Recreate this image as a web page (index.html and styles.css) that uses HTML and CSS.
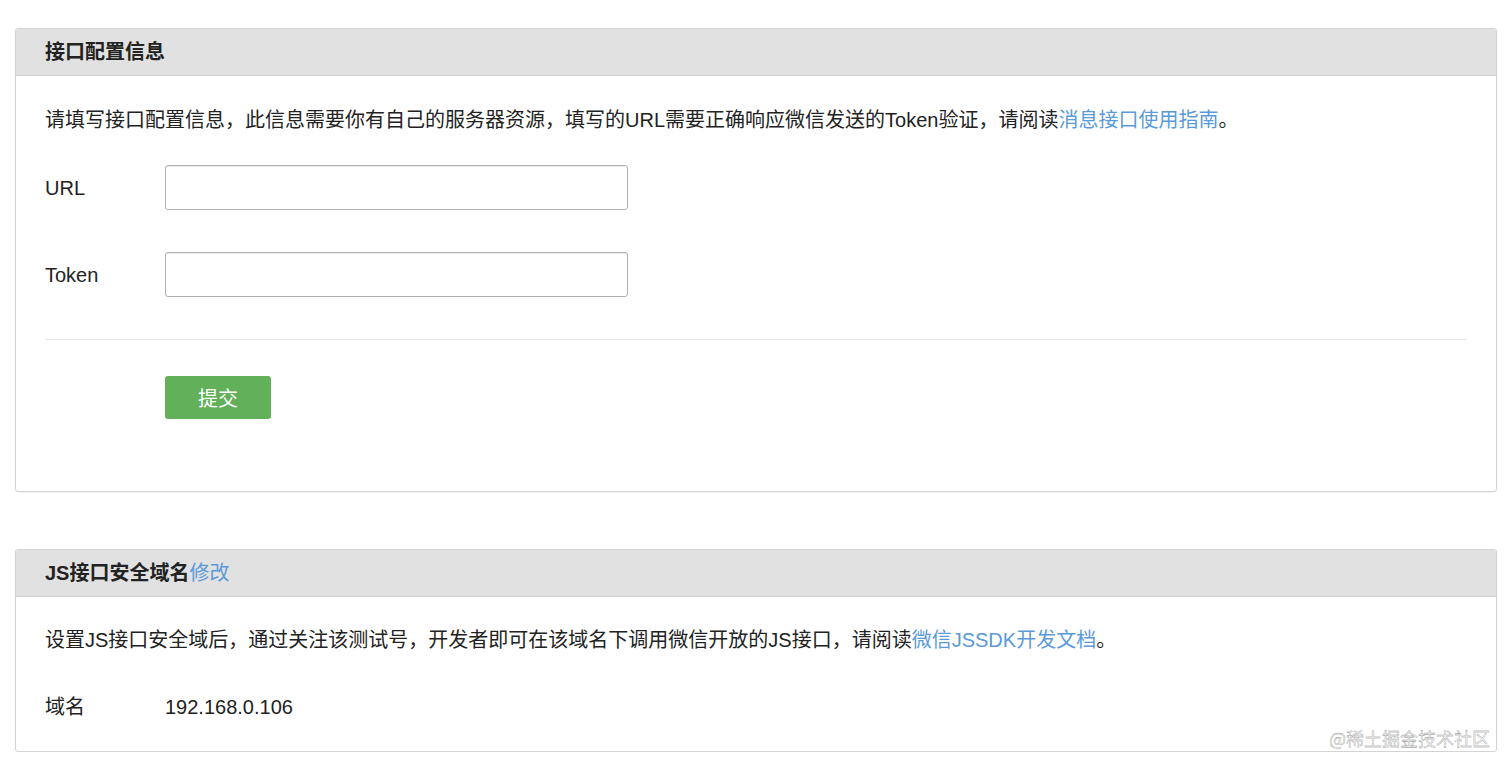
FILE: index.html
```html
<!DOCTYPE html>
<html>

<head>
	<meta charset="utf-8">
	<title>测试号管理</title>
	<link rel="stylesheet" href="styles.css">
</head>

<body>

	<div class="page">

		<div class="panel">
			<div class="panel_head">接口配置信息</div>
			<div class="panel_body">
				<p class="tip">请填写接口配置信息，此信息需要你有自己的服务器资源，填写的URL需要正确响应微信发送的Token验证，请阅读<a href="#">消息接口使用指南</a>。</p>

				<div class="form_row">
					<label class="label">URL</label>
					<input class="field" type="text">
				</div>
				<div class="form_row">
					<label class="label">Token</label>
					<input class="field" type="text">
				</div>

				<div class="divider"></div>

				<div class="actions">
					<button class="submit">提交</button>
				</div>
			</div>
		</div>

		<div class="panel">
			<div class="panel_head">JS接口安全域名<a class="edit" href="#">修改</a></div>
			<div class="panel_body short">
				<p class="tip">设置JS接口安全域后，通过关注该测试号，开发者即可在该域名下调用微信开放的JS接口，请阅读<a href="#">微信JSSDK开发文档</a>。</p>

				<div class="info_row">
					<span class="label">域名</span>
					<span class="value">192.168.0.106</span>
				</div>
			</div>
		</div>

	</div>

	<div class="watermark">@稀土掘金技术社区</div>

</body>
</html>
```

FILE: styles.css
```css
body {
	margin: 0;
	background: #fff;
	color: #222;
	font-family: "Liberation Sans", "Noto Sans CJK SC", sans-serif;
	font-size: 20px;
}
a {
	color: #5a9ad9;
	text-decoration: none;
}
.page {
	padding: 28px 15px 0 15px;
}
.panel {
	border: 1px solid #d4d4d4;
	border-radius: 3px;
	box-shadow: 0 1px 2px rgba(0, 0, 0, 0.06);
	overflow: hidden;
}
.panel + .panel {
	margin-top: 57px;
}
.panel_head {
	background: #e1e1e1;
	border-bottom: 1px solid #cdcdcd;
	height: 46px;
	line-height: 46px;
	padding: 0 29px;
	font-weight: bold;
	color: #222;
}
.edit {
	font-weight: normal;
}
.panel_body {
	padding: 29px 29px 72px 29px;
}
.panel_body.short {
	padding: 28px 29px 29px 29px;
}
.tip {
	margin: 0;
	line-height: 30px;
}
.form_row {
	display: flex;
	align-items: center;
	margin-top: 30px;
}
.form_row + .form_row {
	margin-top: 42px;
}
.label {
	width: 120px;
	flex: none;
	line-height: 30px;
}
.field {
	box-sizing: border-box;
	width: 463px;
	height: 45px;
	margin: 0;
	border: 1px solid #b0b0b0;
	border-radius: 3px;
	box-shadow: inset 0 1px 1px rgba(0, 0, 0, 0.08);
	font-size: 18px;
	padding: 0 10px;
	outline: none;
}
.divider {
	height: 1px;
	background: #e6e6e6;
	margin-top: 42px;
}
.actions {
	padding-left: 120px;
	margin-top: 36px;
}
.submit {
	width: 106px;
	height: 43px;
	background: #62b15a;
	color: #fff;
	border: none;
	border-radius: 3px;
	font-family: "Liberation Sans", "Noto Sans CJK SC", sans-serif;
	font-size: 20px;
	cursor: pointer;
}
.info_row {
	display: flex;
	margin-top: 37px;
	line-height: 30px;
}
.watermark {
	position: absolute;
	right: 22px;
	top: 725px;
	font-family: "Noto Sans CJK SC", sans-serif;
	font-size: 18px;
	line-height: 26px;
	color: #f4f4f4;
	-webkit-text-stroke: 0.3px #8a8a8a;
}
```
